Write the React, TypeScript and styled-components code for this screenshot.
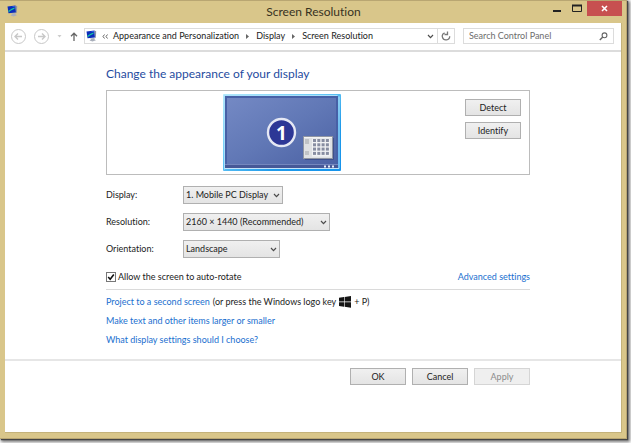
import React from "react";
import styled, { createGlobalStyle } from "styled-components";

const GlobalStyle = createGlobalStyle`
  * { box-sizing: border-box; }
  html, body { margin: 0; background: #fff; }
  body, button, input, select {
    font-family: Lato, "Open Sans", "Noto Sans", sans-serif;
    font-size: 9px;
    line-height: 12px;
    font-variant-ligatures: none;
    color: #222;
  }
`;

const Desktop = styled.div`
  display: flex;
  min-height: 100vh;
  padding: 0 4px 4px 0;
  background: #fff;
`;

const Window = styled.div`
  flex: 1;
  display: flex;
  flex-direction: column;
  min-width: 0;
  padding: 0 4px 5px 5px;
  background: #d9c68a;
  border-top: 1px solid #b9a672;
  border-right: 1px solid #b9a672;
  border-bottom: 1px solid #b9a672;
  box-shadow: 1px 1px 1px #444, 2px 2px 3px 1px #777;
`;

const TitleBar = styled.header`
  display: grid;
  grid-template-columns: 75px 1fr 75px;
  height: 22px;
`;

const TitleIcon = styled.div`
  padding: 4px 0 0 2px;
`;

const Title = styled.h1`
  margin: 0;
  text-align: center;
  font-size: 12px;
  line-height: 22px;
  font-weight: 400;
  color: #38321f;
`;

const WindowButtons = styled.div`
  display: flex;
  justify-content: flex-end;
  align-items: flex-start;
`;

const CaptionButton = styled.button<{ $close?: boolean }>`
  display: grid;
  place-items: center;
  width: ${(p) => (p.$close ? 35 : 20)}px;
  flex-shrink: 0;
  height: 15px;
  padding: 0;
  border: 0;
  background: ${(p) => (p.$close ? "#c75050" : "transparent")};
`;

const Client = styled.main`
  flex: 1;
  display: flex;
  flex-direction: column;
  background: #fff;
  border-right: 1px solid #c4b27a;
  border-bottom: 1px solid #c4b27a;
`;

const NavBar = styled.nav`
  display: flex;
  align-items: center;
  height: 29px;
  padding: 0 7px 1px 5px;
  border-bottom: 2px solid #dcdcdc;
`;

const IconButton = styled.button<{ $width: number }>`
  display: grid;
  place-items: center;
  width: ${(p) => p.$width}px;
  height: 16px;
  padding: 0;
  border: 0;
  background: none;
`;

const Address = styled.div`
  flex: 1;
  display: flex;
  align-items: center;
  height: 16px;
  border: 1px solid #dcdcdc;
`;

const Crumbs = styled.div`
  flex: 1;
  display: flex;
  align-items: center;
  gap: 5px;
  padding-left: 1px;
  white-space: nowrap;
`;

const Crumb = styled.a`
  color: #222;
  text-decoration: none;
`;

const Refresh = styled.div`
  border-left: 1px solid #dcdcdc;
`;

const Search = styled.label`
  display: flex;
  align-items: center;
  width: 151px;
  height: 16px;
  margin-left: 8px;
  padding: 0 5px;
  border: 1px solid #dcdcdc;
`;

const SearchInput = styled.input`
  flex: 1;
  min-width: 0;
  padding: 0;
  border: 0;
  outline: 0;
  background: none;
  &::placeholder { color: #6d6d6d; opacity: 1; }
`;

const Content = styled.section`
  padding: 14px 91px 13px 101px;
`;

const Heading = styled.h2`
  margin: 0 0 8px;
  font-size: 12px;
  line-height: 16px;
  font-weight: 400;
  color: #1f4ca0;
`;

const Preview = styled.div`
  display: flex;
  height: 85px;
  border: 1px solid #bcbcbc;
`;

const Stage = styled.div`
  flex: 1;
  display: grid;
  place-items: center;
`;

const PreviewActions = styled.div`
  display: flex;
  flex-direction: column;
  gap: 6px;
  padding: 8px 8px 0;
`;

const PushButton = styled.button`
  width: 56px;
  height: 17px;
  padding: 0;
  border: 1px solid #b0b0b0;
  background: linear-gradient(#f0f0f0, #e4e4e4);
  line-height: 15px;
  &:disabled {
    color: #8c8c8c;
    border-color: #d5d5d5;
    background: #efefef;
  }
`;

const Fields = styled.div`
  display: grid;
  gap: 9px;
  margin-top: 11px;
`;

const Field = styled.div`
  display: grid;
  grid-template-columns: 77px auto;
  justify-content: start;
  align-items: center;
`;

const SelectBox = styled.div<{ $width: number }>`
  display: grid;
  align-items: center;
  width: ${(p) => p.$width}px;
  & > * { grid-area: 1 / 1; }
  & > svg { justify-self: end; margin-right: 3px; pointer-events: none; }
`;

const Select = styled.select`
  appearance: none;
  width: 100%;
  height: 18px;
  padding: 0 2px;
  border: 1px solid #b0b0b0;
  border-radius: 0;
  background: linear-gradient(#f0f0f0, #e4e4e4);
`;

const RotateRow = styled.div`
  display: flex;
  justify-content: space-between;
  align-items: center;
  margin-top: 13px;
  padding-bottom: 6px;
  border-bottom: 1px solid #dadada;
`;

const CheckLabel = styled.label`
  display: flex;
  align-items: center;
  gap: 2px;
`;

const CheckBox = styled.span`
  display: grid;
  place-items: center;
  & > * { grid-area: 1 / 1; }
  & > svg { pointer-events: none; visibility: hidden; }
  & > input:checked + svg { visibility: visible; }
`;

const CheckInput = styled.input`
  appearance: none;
  width: 10px;
  height: 10px;
  margin: 0;
  border: 1px solid #777;
  background: #fff;
`;

const Link = styled.a`
  color: #1a6fcf;
  text-decoration: none;
`;

const Links = styled.div`
  display: grid;
  gap: 7px;
  margin-top: 6px;
`;

const LinkLine = styled.div`
  display: flex;
  align-items: center;
  gap: 3px;
  white-space: nowrap;
`;

const Footer = styled.footer`
  display: flex;
  justify-content: flex-end;
  gap: 6px;
  padding: 7px 91px 0 0;
  border-top: 2px solid #e6e6e6;
`;

const MonitorIcon = () => (
  <svg width="11" height="12" viewBox="0 0 11 12" aria-hidden="true">
    <path d="M.5 1.500 8.500.5 9 7.500 1.500 8.200z" fill="#0b2dbb" />
    <path d="M8.500.5 10.200 1.200 9.800 8.300 9 7.500z" fill="#8b94a8" />
    <path d="M1.200 6 4.500 3.800 7.500 2.500V3.800L4 5.500 2 7z" fill="#16c8a0" />
    <path d="M4.500 1.500 8 1.200 7.500 2.300z" fill="#3f78ff" />
    <path d="M4 8.400 8.500 7.900 8.600 9.400 10 10.200 6.500 11.400 3.500 10.500 5 9.600z" fill="#a9afbb" />
  </svg>
);

const RoundArrow = ({ forward = false }: { forward?: boolean }) => (
  <svg width="17" height="17" viewBox="0 0 17 17" fill="none" stroke="#c8c8c8" aria-hidden="true">
    <circle cx="8.500" cy="8.500" r="7" strokeWidth="1" />
    {forward ? (
      <path d="M5 8.500h7M9 5.500l3 3-3 3" strokeWidth="1.400" />
    ) : (
      <path d="M12 8.500H5M8 5.500l-3 3 3 3" strokeWidth="1.400" />
    )}
  </svg>
);

const Chevron = () => (
  <svg width="7" height="5" viewBox="0 0 7 5" fill="none" stroke="#4c4c4c" strokeWidth="1.200" aria-hidden="true">
    <path d="M1 1l2.500 2.600L6 1" />
  </svg>
);

const CrumbArrow = () => (
  <svg width="7" height="7" viewBox="0 0 7 7" aria-hidden="true">
    <path d="M2 1v5l3-2.500z" fill="#666" />
  </svg>
);

const WindowsLogo = () => (
  <svg width="12" height="12" viewBox="0 0 12 12" fill="#151515" role="img" aria-label="Windows">
    <path d="M0 1.800 5 1.100v4.500H0zM5.600 1 12 .1v5.500H5.600zM0 6.200h5v4.500L0 10zM5.600 6.200H12v5.500l-6.400-.9z" />
  </svg>
);

const columns = [0, 1, 2, 3];

const DisplayPicture = () => (
  <svg width="118" height="79" viewBox="0 0 118 79" role="img" aria-label="Display 1">
    <defs>
      <linearGradient id="desk" x1="0" y1="0" x2="1" y2="1">
        <stop offset="0" stopColor="#7489c4" />
        <stop offset=".5" stopColor="#6178b6" />
        <stop offset="1" stopColor="#4c62a4" />
      </linearGradient>
      <linearGradient id="glow" x1="0" y1="0" x2="1" y2="1">
        <stop offset="0" stopColor="#b5e9fb" />
        <stop offset=".4" stopColor="#6dcbf7" />
        <stop offset=".7" stopColor="#209bea" />
        <stop offset="1" stopColor="#1593ec" />
      </linearGradient>
    </defs>
    <rect x="0" y="1" width="118" height="77" rx="1" fill="url(#glow)" />
    <path d="M1.500 76.500v-74h113" fill="none" stroke="#a8e0fa" />
    <rect x="2" y="3" width="113" height="73" fill="#4760a6" />
    <rect x="4" y="5" width="109" height="66" fill="url(#desk)" />
    <path d="M2 71.500h113" stroke="#7487be" />
    <path d="M2 72h113v3H2z" fill="#465897" />
    <path d="M2 75.500h114v-72" fill="none" stroke="#c4e4f8" />
    <path d="M101 72.500h2v2h-2zM105 72.500h2v2h-2zM109 72.500h2v2h-2z" fill="#e6edfa" />
    <circle cx="58.500" cy="39.500" r="13.500" fill="#2d3796" stroke="#e5e8f4" strokeWidth="2.400" />
    <text x="58.500" y="46.500" textAnchor="middle" fontFamily="Open Sans" fontSize="19" fontWeight="700" fill="#fff">1</text>
    <path d="M82 66.500h28.500V45" fill="none" stroke="#3f518c" />
    <rect x="80.500" y="43.500" width="29" height="22" fill="#dfe1e4" stroke="#8f95a3" />
    <path d="M81 44.500h28" stroke="#f4f4f4" />
    <path d="M82 46h4v5h-4zM82 58h4v4h-4z" fill="#bfc2c6" />
    <path d="M89 45.500h18v18H89z" fill="#f1f2f4" />
    {columns.map((row) =>
      columns.map((col) => (
        <rect key={`${row}${col}`} x={90 + col * 4.3} y={46 + row * 4.3} width="3" height="3" fill="#878da1" />
      ))
    )}
  </svg>
);

type SelectFieldProps = { id: string; label: string; value: string; width: number };

const SelectField = ({ id, label, value, width }: SelectFieldProps) => (
  <Field>
    <label htmlFor={id}>{label}</label>
    <SelectBox $width={width}>
      <Select id={id} defaultValue={value}>
        <option>{value}</option>
      </Select>
      <Chevron />
    </SelectBox>
  </Field>
);

export default function App() {
  return (
    <>
      <GlobalStyle />
      <Desktop>
        <Window>
          <TitleBar>
            <TitleIcon><MonitorIcon /></TitleIcon>
            <Title>Screen Resolution</Title>
            <WindowButtons>
              <CaptionButton aria-label="Minimize">
                <svg width="10" height="13" viewBox="0 0 10 13"><path d="M1 9h8" stroke="#222" strokeWidth="2" /></svg>
              </CaptionButton>
              <CaptionButton aria-label="Maximize">
                <svg width="10" height="9" viewBox="0 0 10 9"><path d="M.5 1.500h9v6h-9z" fill="none" stroke="#222" /><path d="M0 1.500h10" stroke="#222" strokeWidth="2" /></svg>
              </CaptionButton>
              <CaptionButton $close aria-label="Close">
                <svg width="7" height="7" viewBox="0 0 7 7"><path d="M1 1l5 5M6 1L1 6" stroke="#fff" strokeWidth="1.600" /></svg>
              </CaptionButton>
            </WindowButtons>
          </TitleBar>
          <Client>
            <NavBar>
              <IconButton $width={17} aria-label="Back"><RoundArrow /></IconButton>
              <IconButton $width={29} aria-label="Forward"><RoundArrow forward /></IconButton>
              <IconButton $width={7} aria-label="Recent pages">
                <svg width="5" height="3" viewBox="0 0 5 3"><path d="M.5 0h4L2.500 2.500z" fill="#ccc" /></svg>
              </IconButton>
              <IconButton $width={21} aria-label="Up">
                <svg width="8" height="9" viewBox="0 0 8 9" fill="none" stroke="#666" strokeWidth="1.300"><path d="M4 9V1.200M1 4.200l3-3 3 3" /></svg>
              </IconButton>
              <Address>
                <Crumbs>
                  <MonitorIcon />
                  <svg width="6" height="5" viewBox="0 0 6 5" fill="none" stroke="#666"><path d="M2.500 .5l-1.500 2 1.500 2M5.500 .5l-1.500 2 1.500 2" /></svg>
                  <Crumb href="#personalization">Appearance and Personalization</Crumb>
                  <CrumbArrow />
                  <Crumb href="#display">Display</Crumb>
                  <CrumbArrow />
                  <Crumb href="#resolution">Screen Resolution</Crumb>
                </Crumbs>
                <IconButton $width={13} aria-label="Previous locations"><Chevron /></IconButton>
                <Refresh>
                  <IconButton $width={16} aria-label="Refresh">
                    <svg width="10" height="10" viewBox="0 0 10 10" fill="none" stroke="#777" strokeWidth="1.300"><path d="M3.600 1.800A3.700 3.700 0 1 0 8.700 5.200M6.500.5v3h-3" /></svg>
                  </IconButton>
                </Refresh>
              </Address>
              <Search>
                <SearchInput type="text" aria-label="Search Control Panel" placeholder="Search Control Panel" />
                <svg width="9" height="9" viewBox="0 0 9 9" fill="none" stroke="#666" strokeWidth="1.100"><circle cx="5.500" cy="3.300" r="2.400" /><path d="M3.800 5L.8 8" strokeWidth="1.400" /></svg>
              </Search>
            </NavBar>
            <Content>
              <Heading>Change the appearance of your display</Heading>
              <Preview>
                <Stage><DisplayPicture /></Stage>
                <PreviewActions>
                  <PushButton>Detect</PushButton>
                  <PushButton>Identify</PushButton>
                </PreviewActions>
              </Preview>
              <Fields>
                <SelectField id="display" label="Display:" value="1. Mobile PC Display" width={100} />
                <SelectField id="resolution" label="Resolution:" value="2160 × 1440 (Recommended)" width={147} />
                <SelectField id="orientation" label="Orientation:" value="Landscape" width={97} />
              </Fields>
              <RotateRow>
                <CheckLabel>
                  <CheckBox>
                    <CheckInput type="checkbox" defaultChecked />
                    <svg width="8" height="8" viewBox="0 0 8 8" fill="none" stroke="#111" strokeWidth="1.600"><path d="M1.200 4l2 2.200L6.800 1.600" /></svg>
                  </CheckBox>
                  Allow the screen to auto-rotate
                </CheckLabel>
                <Link href="#advanced">Advanced settings</Link>
              </RotateRow>
              <Links>
                <LinkLine>
                  <Link href="#project">Project to a second screen</Link>
                  <span>(or press the Windows logo key</span>
                  <WindowsLogo />
                  <span>+ P)</span>
                </LinkLine>
                <LinkLine><Link href="#text-size">Make text and other items larger or smaller</Link></LinkLine>
                <LinkLine><Link href="#help">What display settings should I choose?</Link></LinkLine>
              </Links>
            </Content>
            <Footer>
              <PushButton>OK</PushButton>
              <PushButton>Cancel</PushButton>
              <PushButton disabled>Apply</PushButton>
            </Footer>
          </Client>
        </Window>
      </Desktop>
    </>
  );
}
